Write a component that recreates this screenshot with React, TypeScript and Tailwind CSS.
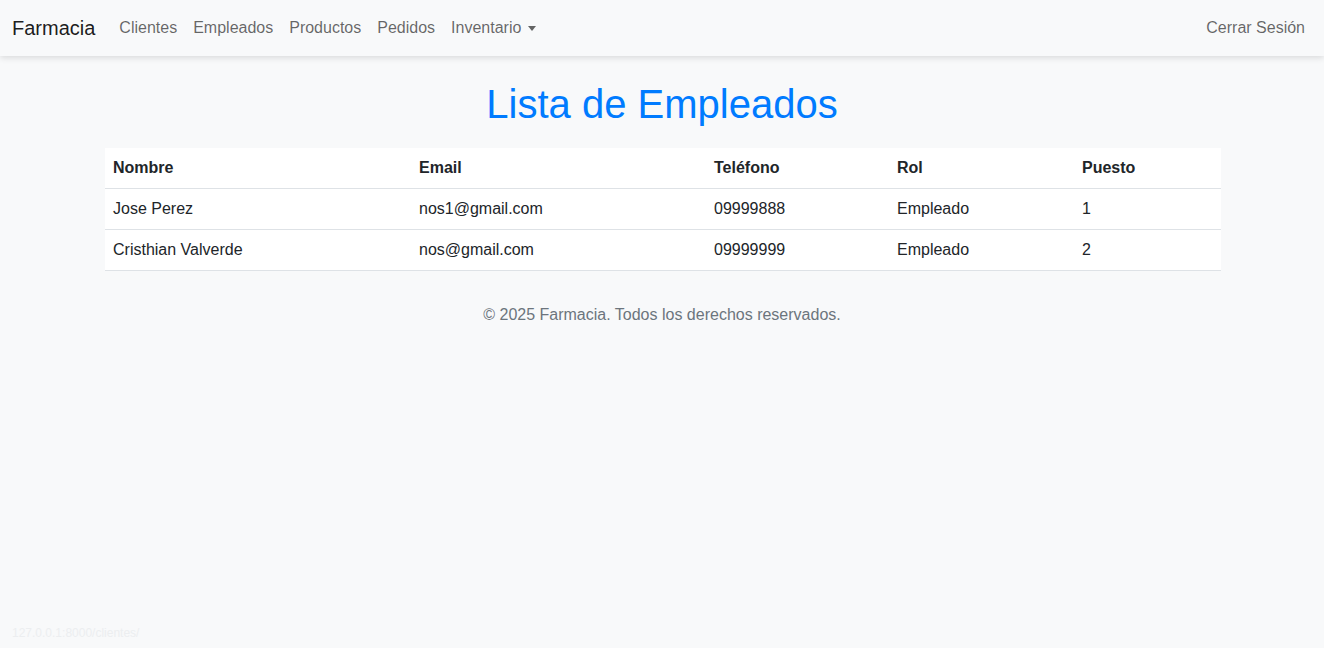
const empleados = [
  { nombre: "Jose Perez", email: "nos1@gmail.com", telefono: "09999888", rol: "Empleado", puesto: "1" },
  { nombre: "Cristhian Valverde", email: "nos@gmail.com", telefono: "09999999", rol: "Empleado", puesto: "2" },
];

const links = ["Clientes", "Empleados", "Productos", "Pedidos"];

function Navbar() {
  return (
    <nav className="flex h-14 items-center justify-between bg-[#f8f9fa] pl-3 pr-[11px] shadow-[0_2px_6px_rgba(0,0,0,0.12)]">
      <div className="flex items-center">
        <span className="mr-4 text-[20px] leading-[30px] text-black/90">Farmacia</span>
        <ul className="flex items-center">
          {links.map((l) => (
            <li key={l} className="px-2 text-[16px] leading-6 text-black/[0.6]">
              {l}
            </li>
          ))}
          <li className="flex items-center px-2 text-[16px] leading-6 text-black/[0.6]">
            Inventario
            <span className="ml-[7px] mt-[1px] h-0 w-0 border-x-[4px] border-t-[5px] border-x-transparent border-t-black/[0.6]" />
          </li>
        </ul>
      </div>
      <span className="px-2 text-[16px] leading-6 text-black/[0.6]">Cerrar Sesión</span>
    </nav>
  );
}

export default function App() {
  return (
    <div className="relative min-h-[648px] bg-[#f8f9fa] font-['Liberation_Sans',Arial,sans-serif] text-[#212529]">
      <Navbar />
      <main className="mx-auto w-[1140px] pl-[13px] pr-[11px]">
        <h1 className="mt-6 mb-5 pr-[2px] text-center text-[40px] leading-[48px] text-[#007bff]">Lista de Empleados</h1>
        <table className="w-full table-fixed border-collapse bg-white text-[16px] leading-6">
          <colgroup>
            <col className="w-[306px]" />
            <col className="w-[295px]" />
            <col className="w-[183px]" />
            <col className="w-[185px]" />
            <col className="w-[147px]" />
          </colgroup>
          <thead>
            <tr className="border-b border-[#dee2e6] text-left">
              <th className="p-2 font-bold">Nombre</th>
              <th className="p-2 font-bold">Email</th>
              <th className="p-2 font-bold">Teléfono</th>
              <th className="p-2 font-bold">Rol</th>
              <th className="p-2 font-bold">Puesto</th>
            </tr>
          </thead>
          <tbody>
            {empleados.map((e) => (
              <tr key={e.email} className="border-b border-[#dee2e6]">
                <td className="p-2">{e.nombre}</td>
                <td className="p-2">{e.email}</td>
                <td className="p-2">{e.telefono}</td>
                <td className="p-2">{e.rol}</td>
                <td className="p-2">{e.puesto}</td>
              </tr>
            ))}
          </tbody>
        </table>
      </main>
      <footer className="mt-8 text-center text-[16px] leading-6 text-[#6c757d]">
        © 2025 Farmacia. Todos los derechos reservados.
      </footer>
      <span className="absolute bottom-[6px] left-3 text-[12px] text-[#eceef0]">127.0.0.1:8000/clientes/</span>
    </div>
  );
}
